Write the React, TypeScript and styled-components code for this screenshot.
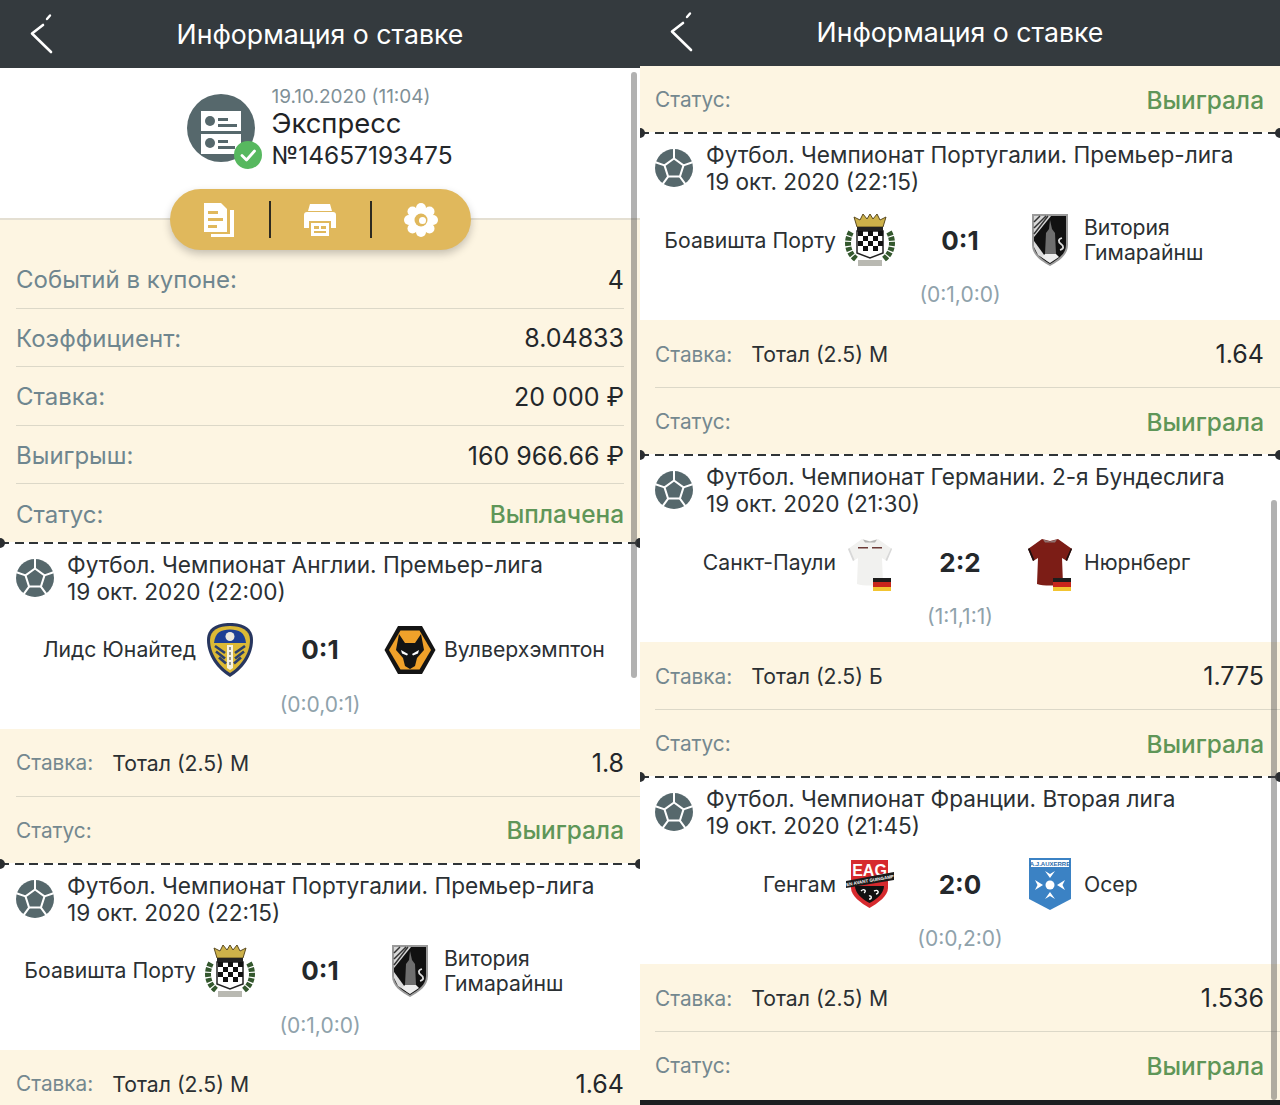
import styled, { createGlobalStyle } from 'styled-components';

const GlobalStyle = createGlobalStyle`
  html, body {
    margin: 0;
    padding: 0;
    background: #1c1e20;
  }
  * {
    box-sizing: border-box;
  }
`;

const BallIcon = () => (
  <svg width="38" height="38" viewBox="0 0 38 38">
    <circle cx="19" cy="19" r="19" fill="#56686c" />
    <path d="M19 9.500l9.500 6.900-3.600 11.200H13.100L9.500 16.400z" fill="none" stroke="#fff" strokeWidth="2" strokeLinejoin="round" />
    <path d="M19 9.500V0M28.500 16.400l9-3.200M24.900 27.600l5.800 8M13.100 27.600l-5.800 8M9.500 16.400l-9-3.200" stroke="#fff" strokeWidth="2" fill="none" />
  </svg>
);

const LeedsCrest = () => (
  <svg width="46" height="54" viewBox="0 0 46 54">
    <path d="M23 0c13 0 23 5 23 17 0 16-11 30-23 37C11 47 0 33 0 17 0 5 10 0 23 0z" fill="#27365f" />
    <path d="M23 3c11 0 20 4 20 14 0 14-10 27-20 33C13 44 3 31 3 17 3 7 12 3 23 3z" fill="#dcb935" />
    <path d="M23 6.500c9 0 15 3 16 13.500H7C8 9.500 14 6.500 23 6.500z" fill="#1c3f94" />
    <circle cx="23" cy="13.500" r="4.500" fill="#eceadf" />
    <path d="M8 23l10 7M9 28.500l9 7M12 34.500l7 6M38 23l-10 7M37 28.500l-9 7M34 34.500l-7 6" stroke="#2b3f6c" strokeWidth="2.600" />
    <path d="M20 22h6v23l-3 2-3-2z" fill="#f5f2e2" />
    <path d="M23 24v18" stroke="#555" strokeWidth="1.200" strokeDasharray="3 2" />
  </svg>
);

const WolvesCrest = () => (
  <svg width="52" height="50" viewBox="0 0 52 50">
    <path d="M14 1h24l13.500 24L38 49H14L.5 25z" fill="#141414" />
    <path d="M16.500 5.500h19L47 25 35.500 44.500h-19L5 25z" fill="#f0a12a" />
    <path d="M15 9l6 9h10l6-9 3 16-7 8-2 8-5 3-5-3-2-8-7-8z" fill="#141414" />
    <path d="M17 25l7 4-1 1.500-5-2zM35 25l-7 4 1 1.500 5-2z" fill="#fff" />
  </svg>
);

const BoavistaCrest = () => (
  <svg width="50" height="54" viewBox="0 0 50 54">
    <path d="M12 14L9 4l6 3 3-6 4 5 3-5 3 5 4-5 3 6 6-3-3 10z" fill="#cdb14a" stroke="#5a4a20" strokeWidth="1" />
    <path d="M12 14h26v4H12z" fill="#222" />
    <path d="M12 18h26v22l-13 5-13-5z" fill="#fff" stroke="#222" strokeWidth="1.500" />
    <path d="M13 18h5v5h-5zM23 18h5v5h-5zM33 18h5v5h-5zM18 23h5v5h-5zM28 23h5v5h-5zM13 28h5v5h-5zM23 28h5v5h-5zM33 28h5v5h-5zM18 33h5v5h-5zM28 33h5v5h-5z" fill="#111" />
    <path d="M6 19c-5 9-4 20 5 27M44 19c5 9 4 20-5 27" stroke="#34582e" strokeWidth="6" strokeDasharray="4 1.200" fill="none" />
    <path d="M13 47h24v6H13z" fill="#b9b9b2" />
  </svg>
);

const GuimaraesCrest = () => (
  <svg width="38" height="54" viewBox="0 0 38 54">
    <path d="M1 1h36v31c0 10-9 16-18 21C10 48 1 42 1 32z" fill="#9a9a9a" />
    <path d="M3 3h32v29c0 9-8 14-16 19C11 46 3 41 3 32z" fill="#111" />
    <path d="M3 3h17L3 24z" fill="#d8d8d8" />
    <path d="M3 9l6-6M3 15l12-12M3 21l14-18" stroke="#333" strokeWidth="1.500" />
    <path d="M3 28l16 22L7 42 3 34z" fill="#ddd" />
    <path d="M19 7l2 9 3 4 1 21H14l1-21 3-4z" fill="#6e6e6e" />
    <path d="M14 41h11l3 3-9 6-8-6z" fill="#eee" />
    <path d="M31 25c-4 1-4 4-1 6s3 5-1 6" stroke="#ddd" strokeWidth="1.800" fill="none" />
  </svg>
);

const ShirtIcon = ({ color, trim, sleeve }: { color: string; trim: string; sleeve: string }) => (
  <ShirtWrap>
    <svg width="46" height="48" viewBox="0 0 46 48">
      <path d="M15 1l8 2 8-2 14 10-5 12-5-3 1 26c-6 2-20 2-26 0l1-26-5 3L1 11z" fill={color} />
      <path d="M1 11l5 12 1.500-1L2.500 10zM45 11l-5 12-1.500-1 5.500-12z" fill={sleeve} />
      <path d="M11 9h10v1.500H11zM25 9h10v1.500H25z" fill={trim} />
      <path d="M16 1.500l7 2 7-2-2 3H18z" fill="#999" opacity="0.7" />
    </svg>
    <FlagBadge>
      <FlagStripe $color="#1d1d1d" />
      <FlagStripe $color="#c8261c" />
      <FlagStripe $color="#f2c431" />
    </FlagBadge>
  </ShirtWrap>
);

const GuingampCrest = () => (
  <svg width="50" height="50" viewBox="0 0 50 50">
    <path d="M6 1h37v28c0 8-10 15-18.500 20C16 44 6 37 6 29z" fill="#d62a2e" />
    <text x="24.500" y="16.500" textAnchor="middle" fontFamily="Liberation Sans, sans-serif" fontWeight="700" fontSize="16" fill="#fff">EAG</text>
    <path d="M10 27h29c0 7-7 13-14.500 17C17 40 10 34 10 27z" fill="#111" />
    <path d="M16 32c3-3 6 0 3 2M29 32c4-2 6 2 2 3M24 37c3-1 3 3 0 3" stroke="#fff" strokeWidth="1.400" fill="none" />
    <path d="M1 22l48-9v8L1 29z" fill="#1a1a1a" />
    <text x="25" y="23" textAnchor="middle" fontFamily="Liberation Sans, sans-serif" fontWeight="700" fontSize="4.500" fill="#fff" transform="rotate(-10 25 21)">EN AVANT GUINGAMP</text>
  </svg>
);

const AuxerreCrest = () => (
  <svg width="44" height="54" viewBox="0 0 44 54">
    <path d="M1 1h42v41l-21 11L1 42z" fill="#3b82c4" />
    <path d="M3 3h38v7H3z" fill="#fff" />
    <text x="22" y="9" textAnchor="middle" fontFamily="Liberation Sans, sans-serif" fontWeight="700" fontSize="6" fill="#2b6cac">A.J.AUXERRE</text>
    <circle cx="22" cy="28" r="4.500" fill="#fff" />
    <path d="M22 21l-5-7 5 3 5-3zM22 35l-5 7 5-3 5 3zM15 28l-8-5 2.500 5L7 33zM29 28l8-5-2.500 5 2.500 5z" fill="#fff" />
  </svg>
);

const crests = {
  leeds: <LeedsCrest />,
  wolves: <WolvesCrest />,
  boavista: <BoavistaCrest />,
  guimaraes: <GuimaraesCrest />,
  pauli: <ShirtIcon color="#f1f1ef" trim="#6b3a36" sleeve="#d8d8d8" />,
  nurnberg: <ShirtIcon color="#7c1d16" trim="#7c1d16" sleeve="#1d1010" />,
  guingamp: <GuingampCrest />,
  auxerre: <AuxerreCrest />,
};

type EventData = {
  league: string;
  date: string;
  home: string;
  homeCrest: keyof typeof crests;
  score: string;
  away: string;
  awayCrest: keyof typeof crests;
  periods: string;
  market: string;
  odds: string;
};

const leeds: EventData = {
  league: 'Футбол. Чемпионат Англии. Премьер-лига',
  date: '19 окт. 2020 (22:00)',
  home: 'Лидс Юнайтед',
  homeCrest: 'leeds',
  score: '0:1',
  away: 'Вулверхэмптон',
  awayCrest: 'wolves',
  periods: '(0:0,0:1)',
  market: 'Тотал (2.5) М',
  odds: '1.8',
};

const boavista: EventData = {
  league: 'Футбол. Чемпионат Португалии. Премьер-лига',
  date: '19 окт. 2020 (22:15)',
  home: 'Боавишта Порту',
  homeCrest: 'boavista',
  score: '0:1',
  away: 'Витория Гимарайнш',
  awayCrest: 'guimaraes',
  periods: '(0:1,0:0)',
  market: 'Тотал (2.5) М',
  odds: '1.64',
};

const pauli: EventData = {
  league: 'Футбол. Чемпионат Германии. 2-я Бундеслига',
  date: '19 окт. 2020 (21:30)',
  home: 'Санкт-Паули',
  homeCrest: 'pauli',
  score: '2:2',
  away: 'Нюрнберг',
  awayCrest: 'nurnberg',
  periods: '(1:1,1:1)',
  market: 'Тотал (2.5) Б',
  odds: '1.775',
};

const guingamp: EventData = {
  league: 'Футбол. Чемпионат Франции. Вторая лига',
  date: '19 окт. 2020 (21:45)',
  home: 'Генгам',
  homeCrest: 'guingamp',
  score: '2:0',
  away: 'Осер',
  awayCrest: 'auxerre',
  periods: '(0:0,2:0)',
  market: 'Тотал (2.5) М',
  odds: '1.536',
};

const summary = [
  { label: 'Событий в купоне:', value: '4' },
  { label: 'Коэффициент:', value: '8.04833' },
  { label: 'Ставка:', value: '20 000 ₽' },
  { label: 'Выигрыш:', value: '160 966.66 ₽' },
];

const StatusRow = ({ text }: { text: string }) => (
  <BetStatus>
    <BetLabel>Статус:</BetLabel>
    <GreenValue>{text}</GreenValue>
  </BetStatus>
);

const TicketEdge = () => (
  <Edge>
    <EdgeDot $side="left" />
    <EdgeDot $side="right" />
  </Edge>
);

const EventCard = ({ data, noStatus }: { data: EventData; noStatus?: boolean }) => (
  <>
    <TicketEdge />
    <EventBlock>
      <EventHead>
        <BallIcon />
        <EventTitle>
          <div>{data.league}</div>
          <div>{data.date}</div>
        </EventTitle>
      </EventHead>
      <Match>
        <TeamName $side="home">{data.home}</TeamName>
        <CrestBox>{crests[data.homeCrest]}</CrestBox>
        <Score>{data.score}</Score>
        <CrestBox>{crests[data.awayCrest]}</CrestBox>
        <TeamName $side="away">{data.away}</TeamName>
      </Match>
      <Periods>{data.periods}</Periods>
    </EventBlock>
    <BetRow>
      <BetLabel>Ставка:</BetLabel>
      <Market>{data.market}</Market>
      <Odds>{data.odds}</Odds>
    </BetRow>
    {!noStatus && <StatusRow text="Выиграла" />}
  </>
);

const App = () => (
  <>
    <GlobalStyle />
    <Page>
      <Phone $inset={16} $eventHeight={185}>
        <Header $height={68}>
          <BackIcon />
          <HeaderTitle>Информация о ставке</HeaderTitle>
        </Header>
        <Summary>
          <SummaryTop>
            <BetIconWrap>
              <BetIcon />
              <CheckBadge>
                <svg width="28" height="28" viewBox="0 0 28 28">
                  <circle cx="14" cy="14" r="14" fill="#57b85f" />
                  <path d="M8 14.500l4.500 4.500L20.500 10" stroke="#fff" strokeWidth="2.800" fill="none" strokeLinecap="round" strokeLinejoin="round" />
                </svg>
              </CheckBadge>
            </BetIconWrap>
            <SummaryText>
              <SummaryDate>19.10.2020 (11:04)</SummaryDate>
              <SummaryType>Экспресс</SummaryType>
              <SummaryNumber>№14657193475</SummaryNumber>
            </SummaryText>
          </SummaryTop>
          <ActionPill>
            <PillButton><DocsIcon /></PillButton>
            <PillDivider />
            <PillButton><PrinterIcon /></PillButton>
            <PillDivider />
            <PillButton><GearIcon /></PillButton>
          </ActionPill>
        </Summary>
        <SummaryList>
          {summary.map((row) => (
            <SummaryRow key={row.label}>
              <SummaryLabel>{row.label}</SummaryLabel>
              <SummaryValue>{row.value}</SummaryValue>
            </SummaryRow>
          ))}
          <SummaryRow $last>
            <SummaryLabel>Статус:</SummaryLabel>
            <GreenValue>Выплачена</GreenValue>
          </SummaryRow>
        </SummaryList>
        <EventCard data={leeds} />
        <EventCard data={boavista} noStatus />
        <Scrollbar $top={72} $height={606} />
      </Phone>
      <Phone $inset={15} $eventHeight={186}>
        <Header $height={66} $raised>
          <BackIcon raised />
          <HeaderTitle>Информация о ставке</HeaderTitle>
        </Header>
        <StatusRow text="Выиграла" />
        <EventCard data={boavista} />
        <EventCard data={pauli} />
        <EventCard data={guingamp} />
        <Scrollbar $top={500} $height={600} />
        <BottomStrip />
      </Phone>
    </Page>
  </>
);

const BackIcon = ({ raised }: { raised?: boolean }) => (
  <BackWrap $raised={raised}>
    <svg width="24" height="42" viewBox="0 0 24 42">
      <path d="M14 13L3 21.500 22 40" stroke="#fff" strokeWidth="2.600" fill="none" strokeLinecap="round" strokeLinejoin="round" />
      <path d="M18 7l3-3.500" stroke="#fff" strokeWidth="2.400" strokeLinecap="round" />
    </svg>
  </BackWrap>
);

const BetIcon = () => (
  <svg width="68" height="68" viewBox="0 0 68 68">
    <circle cx="34" cy="34" r="34" fill="#56686c" />
    <path d="M14 17h40v20H14zM14 40h40v20H14z" fill="#fff" />
    <circle cx="23" cy="27" r="5" fill="#56686c" />
    <circle cx="23" cy="49" r="5" fill="#56686c" />
    <path d="M31 24h10v3H31zM31 30h19v3H31zM31 46h10v3H31zM31 52h17v3H31z" fill="#56686c" />
  </svg>
);

const DocsIcon = () => (
  <svg width="32" height="36" viewBox="0 0 32 36">
    <path d="M1 1h17l6 6v23H1z" fill="#fff" />
    <path d="M27 8h4v27H8v-3h19z" fill="#fff" />
    <path d="M5 9h10v3H5zM5 16h15v3H5zM5 23h9v3H5z" fill="#e0b85c" />
  </svg>
);

const PrinterIcon = () => (
  <svg width="34" height="34" viewBox="0 0 34 34">
    <path d="M7 1h20l2 7H5z" fill="#fff" />
    <path d="M1 12c0-2 1-3 3-3h26c2 0 3 1 3 3v13h-5v-7H6v7H1z" fill="#fff" />
    <path d="M8 20h18v13H8z" fill="#fff" />
    <path d="M11 23h5v3h-5zM18 23h5v3h-5zM11 28h12v2H11z" fill="#e0b85c" />
  </svg>
);

const GearIcon = () => (
  <svg width="36" height="36" viewBox="0 0 36 36">
    <g fill="#fff">
      <circle cx="18" cy="18" r="12.500" />
      <circle cx="18" cy="6" r="5" />
      <circle cx="18" cy="30" r="5" />
      <circle cx="6" cy="18" r="5" />
      <circle cx="30" cy="18" r="5" />
      <circle cx="9.500" cy="9.500" r="5" />
      <circle cx="26.500" cy="9.500" r="5" />
      <circle cx="9.500" cy="26.500" r="5" />
      <circle cx="26.500" cy="26.500" r="5" />
    </g>
    <circle cx="18" cy="18" r="6.500" fill="#e0b85c" />
    <circle cx="19.500" cy="18.500" r="3.500" fill="#fff" />
  </svg>
);

/////////////////////////////////////////////////////////////////////////////////////////

const Page = styled.div`
  display: grid;
  grid-template-columns: 640px 640px;
  width: 1280px;
  height: 1105px;
  overflow: hidden;
  font-family: Inter, 'Liberation Sans', sans-serif;
`;

const Phone = styled.div<{ $inset: number; $eventHeight: number }>`
  --inset: ${(p) => p.$inset}px;
  --event-height: ${(p) => p.$eventHeight}px;
  position: relative;
  height: 1105px;
  overflow: hidden;
  background: #fdf5e2;
`;

const Header = styled.div<{ $height: number; $raised?: boolean }>`
  position: relative;
  height: ${(p) => p.$height}px;
  padding-bottom: ${(p) => (p.$raised ? 2 : 0)}px;
  background: #343a3e;
  display: flex;
  align-items: center;
  justify-content: center;
`;

const BackWrap = styled.div<{ $raised?: boolean }>`
  position: absolute;
  left: 29px;
  top: ${(p) => (p.$raised ? 10 : 12)}px;
  line-height: 0;
`;

const HeaderTitle = styled.div`
  color: #fff;
  font-size: 26.7px;
  font-weight: 400;
`;

const Summary = styled.div`
  height: 152px;
  background: #fff;
  border-bottom: 2px solid #e4dfd2;
  display: flex;
  flex-direction: column;
  align-items: center;
  padding-top: 18px;
  position: relative;
`;

const SummaryTop = styled.div`
  display: flex;
  align-items: center;
  gap: 16px;
  height: 90px;
`;

const BetIconWrap = styled.div`
  position: relative;
  line-height: 0;
`;

const CheckBadge = styled.div`
  position: absolute;
  right: -7px;
  bottom: -7px;
`;

const SummaryText = styled.div`
  display: flex;
  flex-direction: column;
`;

const SummaryDate = styled.div`
  font-size: 19px;
  line-height: 22px;
  color: #7f9097;
`;

const SummaryType = styled.div`
  font-size: 27.4px;
  line-height: 31px;
  color: #1f2326;
`;

const SummaryNumber = styled.div`
  font-size: 24.5px;
  line-height: 30px;
  margin-top: 1px;
  color: #24282b;
`;

const ActionPill = styled.div`
  position: relative;
  z-index: 2;
  flex: none;
  width: 301px;
  height: 61px;
  margin-top: 19px;
  border-radius: 31px;
  background: #e0b85c;
  box-shadow: 0 4px 8px rgba(0, 0, 0, 0.22);
  display: grid;
  grid-template-columns: 1fr 2px 1fr 2px 1fr;
  align-items: center;
`;

const PillButton = styled.div`
  display: flex;
  justify-content: center;
  align-items: center;
  line-height: 0;
`;

const PillDivider = styled.div`
  width: 2px;
  height: 37px;
  background: #2d2a20;
`;

const SummaryList = styled.div`
  padding-top: 30px;
`;

const SummaryRow = styled.div<{ $last?: boolean }>`
  height: ${(p) => (p.$last ? 57.6 : 58.6)}px;
  margin: 0 16px;
  padding-top: 2px;
  display: flex;
  align-items: center;
  justify-content: space-between;
  border-bottom: ${(p) => (p.$last ? 'none' : '1px solid #dcd8c8')};
`;

const SummaryLabel = styled.div`
  font-size: 24px;
  color: #6f868f;
`;

const SummaryValue = styled.div`
  font-size: 25px;
  color: #23272a;
`;

const GreenValue = styled.div`
  font-size: 24.4px;
  font-weight: 500;
  color: #5f9658;
`;

const Edge = styled.div`
  position: relative;
  height: 2px;
  background: repeating-linear-gradient(90deg, #2f3437 0 9px, transparent 9px 14.600px);
  background-color: #fff;
  z-index: 1;
`;

const EdgeDot = styled.span<{ $side: 'left' | 'right' }>`
  position: absolute;
  top: -4px;
  ${(p) => p.$side}: -5px;
  width: 10px;
  height: 10px;
  border-radius: 50%;
  background: #2a2d30;
`;

const EventBlock = styled.div`
  height: var(--event-height);
  background: #fff;
  padding-top: 7px;
`;

const EventHead = styled.div`
  display: flex;
  align-items: center;
  gap: 13px;
  padding-left: var(--inset);
`;

const EventTitle = styled.div`
  font-size: 22.6px;
  line-height: 27px;
  color: #2b3033;
`;

const Match = styled.div`
  display: grid;
  grid-template-columns: minmax(0, 1fr) 52px 112px 52px minmax(0, 1fr);
  column-gap: 8px;
  align-items: center;
  height: 58px;
  margin-top: 16px;
`;

const TeamName = styled.div<{ $side: 'home' | 'away' }>`
  font-size: 21.2px;
  line-height: 25px;
  color: #2b3033;
  text-align: ${(p) => (p.$side === 'home' ? 'right' : 'left')};
  ${(p) => (p.$side === 'away' ? 'max-width: 170px;' : '')}
`;

const CrestBox = styled.div`
  display: flex;
  justify-content: center;
  align-items: center;
  line-height: 0;
`;

const Score = styled.div`
  font-size: 26px;
  font-weight: 700;
  text-align: center;
  color: #24282b;
`;

const Periods = styled.div`
  margin-top: 13px;
  text-align: center;
  font-size: 21px;
  line-height: 26px;
  color: #8fa2ab;
`;

const BetRow = styled.div`
  height: 68px;
  padding: 1px 16px 0 0;
  margin-left: var(--inset);
  display: flex;
  align-items: center;
  border-bottom: 1px solid #dcd8c8;
`;

const BetStatus = styled.div`
  height: 66px;
  padding: 1px 16px 0 var(--inset);
  display: flex;
  align-items: center;
  justify-content: space-between;
`;

const BetLabel = styled.div`
  font-size: 20.8px;
  color: #74888f;
`;

const Market = styled.div`
  font-size: 21.2px;
  color: #2b3033;
  margin-left: 19px;
`;

const Odds = styled.div`
  margin-left: auto;
  font-size: 25px;
  color: #23272a;
`;

const ShirtWrap = styled.div`
  position: relative;
  line-height: 0;
`;

const FlagBadge = styled.div`
  position: absolute;
  right: 2px;
  bottom: -5px;
  width: 18px;
  height: 13px;
  display: flex;
  flex-direction: column;
`;

const FlagStripe = styled.span<{ $color: string }>`
  flex: 1;
  background: ${(p) => p.$color};
`;

const Scrollbar = styled.div<{ $top: number; $height: number }>`
  position: absolute;
  right: 3px;
  top: ${(p) => p.$top}px;
  width: 6px;
  height: ${(p) => p.$height}px;
  border-radius: 3px;
  background: rgba(70, 70, 70, 0.42);
  z-index: 3;
`;

const BottomStrip = styled.div`
  position: absolute;
  left: 0;
  right: 0;
  bottom: 0;
  height: 5px;
  background: #1c1e20;
  z-index: 4;
`;

export default App;
